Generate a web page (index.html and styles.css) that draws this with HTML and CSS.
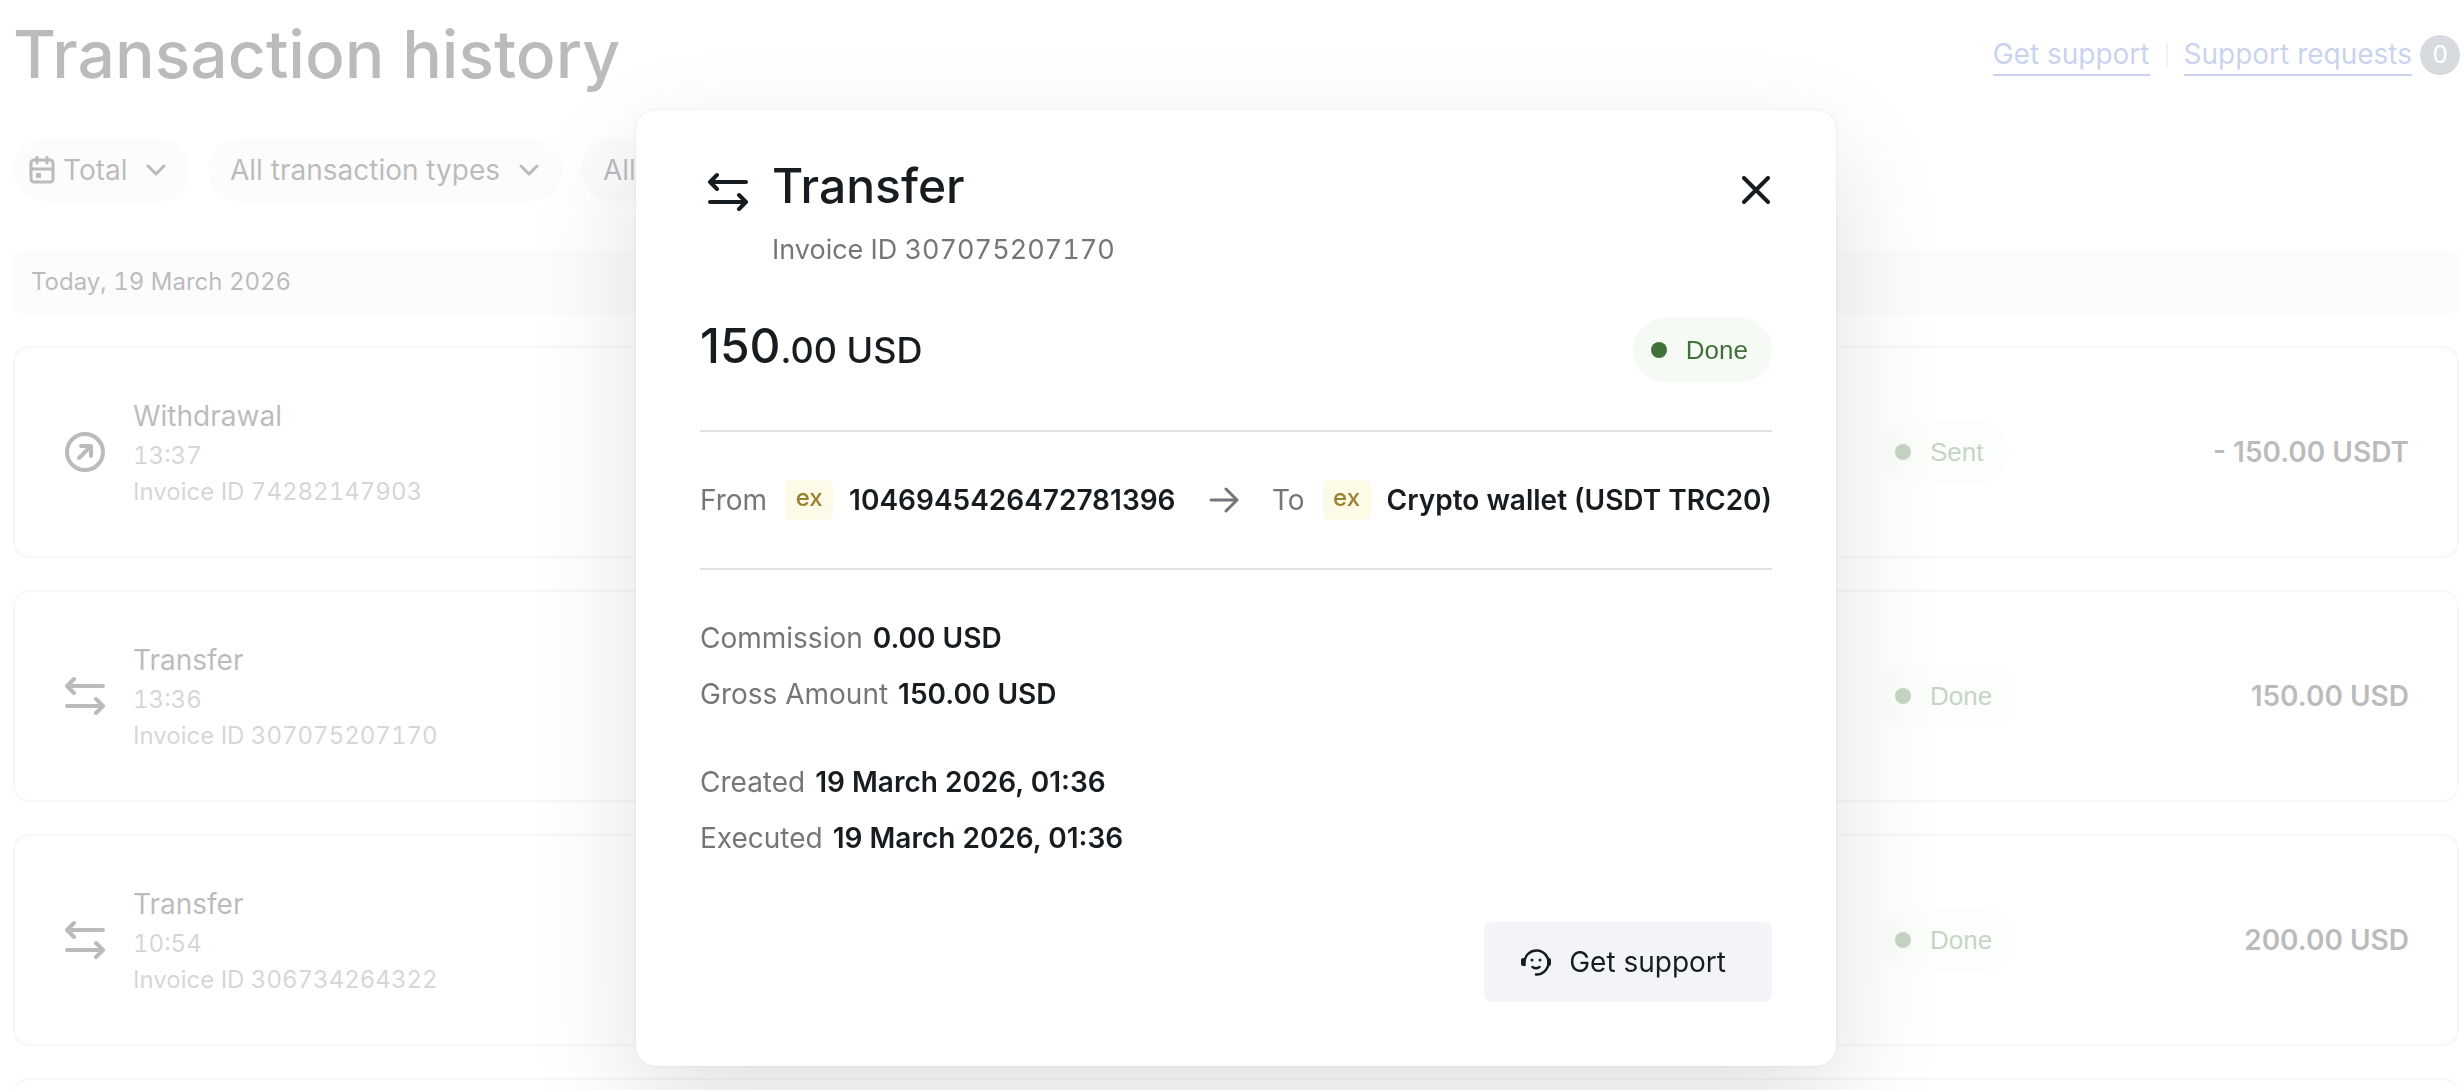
FILE: index.html
```html
<!DOCTYPE html>
<html lang="en">
<head>
<meta charset="utf-8">
<meta name="viewport" content="width=device-width, initial-scale=1">
<title>Transaction history</title>
<link rel="stylesheet" href="styles.css">
</head>
<body>
<svg class="sprite" aria-hidden="true">
  <symbol id="i-transfer" viewBox="0 0 40 40"><path d="M38 10H2M9 3L2 10l7 7M2 30h36M31 23l7 7-7 7"/></symbol>
  <symbol id="i-out" viewBox="0 0 40 40"><circle cx="20" cy="20" r="18"/><path d="M14 26l12-12M16 14h10v10"/></symbol>
  <symbol id="i-chevron" viewBox="0 0 20 12"><path d="M2 2l8 8 8-8"/></symbol>
  <symbol id="i-calendar" viewBox="0 0 26 28"><rect x="2" y="4" width="22" height="22" rx="3"/><path d="M2 13h22M8 1v6M18 1v6"/><path class="fill" d="M7 17h5v5H7z"/></symbol>
  <symbol id="i-close" viewBox="0 0 28 28"><path d="M2 2l24 24M26 2L2 26"/></symbol>
  <symbol id="i-arrow" viewBox="0 0 30 26"><path d="M2 13h26M17 2l11 11-11 11"/></symbol>
  <symbol id="i-support" viewBox="0 0 30 28"><path d="M2 12v4M28 12v4" stroke-width="4"/><path stroke-width="2.500" d="M3.500 17V14A12 12 0 1 1 15 26.500M11.500 19q3.500 2.500 7 0"/><circle class="fill" cx="11" cy="12" r="1.500"/><circle class="fill" cx="19" cy="12" r="1.500"/></symbol>
</svg>

<main class="page">
  <header class="page-header">
    <h1 class="page-title">Transaction history</h1>
    <nav class="support-links">
      <a class="link" href="#support">Get support</a>
      <span class="separator"></span>
      <a class="link" href="#requests">Support requests</a>
      <span class="count">0</span>
    </nav>
  </header>

  <div class="filters">
    <label class="filter filter-date">
      <svg class="icon-calendar"><use href="#i-calendar"/></svg>
      <select aria-label="Period"><option>Total</option></select>
      <svg class="icon-chevron"><use href="#i-chevron"/></svg>
    </label>
    <label class="filter">
      <select aria-label="Transaction type"><option>All transaction types</option></select>
      <svg class="icon-chevron"><use href="#i-chevron"/></svg>
    </label>
    <label class="filter">
      <select aria-label="Status"><option>All</option></select>
      <svg class="icon-chevron"><use href="#i-chevron"/></svg>
    </label>
  </div>

  <h2 class="day">Today, 19 March 2026</h2>

  <ul class="transactions">
    <li class="transaction">
      <svg class="icon"><use href="#i-out"/></svg>
      <div class="summary"><p class="kind">Withdrawal</p><p class="meta">13:37</p><p class="meta">Invoice ID 74282147903</p></div>
      <div class="state"><span class="badge">Sent</span></div>
      <strong class="sum">- 150.00 USDT</strong>
    </li>
    <li class="transaction">
      <svg class="icon"><use href="#i-transfer"/></svg>
      <div class="summary"><p class="kind">Transfer</p><p class="meta">13:36</p><p class="meta">Invoice ID 307075207170</p></div>
      <div class="state"><span class="badge">Done</span></div>
      <strong class="sum">150.00 USD</strong>
    </li>
    <li class="transaction">
      <svg class="icon"><use href="#i-transfer"/></svg>
      <div class="summary"><p class="kind">Transfer</p><p class="meta">10:54</p><p class="meta">Invoice ID 306734264322</p></div>
      <div class="state"><span class="badge">Done</span></div>
      <strong class="sum">200.00 USD</strong>
    </li>
    <li class="transaction"></li>
  </ul>
</main>

<div class="overlay">
  <section class="modal" role="dialog" aria-modal="true" aria-labelledby="modal-title">
    <header class="modal-header">
      <svg class="icon"><use href="#i-transfer"/></svg>
      <div class="modal-heading">
        <h2 class="modal-title" id="modal-title">Transfer</h2>
        <p class="modal-sub">Invoice ID 307075207170</p>
      </div>
      <button class="close" type="button" aria-label="Close"><svg><use href="#i-close"/></svg></button>
    </header>
    <div class="amount-row">
      <p class="amount">150<span class="amount-rest">.00 USD</span></p>
      <span class="badge">Done</span>
    </div>
    <div class="route">
      <span class="label">From</span><span class="tile">ex</span><strong>1046945426472781396</strong>
      <svg class="icon-arrow"><use href="#i-arrow"/></svg>
      <span class="label">To</span><span class="tile">ex</span><strong>Crypto wallet (USDT TRC20)</strong>
    </div>
    <dl class="details">
      <div><dt>Commission</dt><dd>0.00 USD</dd></div>
      <div><dt>Gross Amount</dt><dd>150.00 USD</dd></div>
    </dl>
    <dl class="details">
      <div><dt>Created</dt><dd>19 March 2026, 01:36</dd></div>
      <div><dt>Executed</dt><dd>19 March 2026, 01:36</dd></div>
    </dl>
    <footer class="modal-footer">
      <button class="support" type="button"><svg><use href="#i-support"/></svg>Get support</button>
    </footer>
  </section>
</div>
</body>
</html>
```
FILE: styles.css
```css
* { box-sizing: border-box; }

body {
  margin: 0;
  height: 100vh;
  overflow: hidden;
  background: #fff;
  color: #171c20;
  font: 400 28px/40px Inter, "Liberation Sans", sans-serif;
}

h1, h2, p, ul, dl, dd { margin: 0; padding: 0; font-weight: inherit; }
ul { list-style: none; }
strong, dd { font-weight: 600; }
button, select { font: inherit; color: inherit; border: 0; background: none; padding: 0; }

svg { fill: none; stroke: currentColor; stroke-width: 4; stroke-linecap: round; stroke-linejoin: round; flex: none; display: block; }
.fill { fill: currentColor; stroke: none; }
.sprite { display: none; }
.icon { width: 40px; height: 40px; }
.icon-chevron { width: 20px; height: 12px; stroke-width: 3; }
.icon-calendar { width: 26px; height: 28px; stroke-width: 3; }
.icon-arrow { width: 30px; height: 26px; stroke-width: 3; color: #73777a; margin: 0 auto; }

/* Page */
.page { height: 100vh; overflow: hidden; padding: 16px 2px 0 13px; }
.page-header { display: flex; justify-content: space-between; align-items: flex-start; height: 122px; }
.page-title { font-size: 66px; line-height: 76px; font-weight: 500; }
.support-links { display: flex; align-items: center; padding-top: 18px; }
.link { color: #486cc6; text-decoration: none; line-height: 40px; border-bottom: 2px solid; }
.separator { width: 2px; height: 24px; margin: 0 16px; background: #d0d0d0; }
.count { width: 40px; height: 40px; margin-left: 8px; border-radius: 50%; background: #7a8491; color: #fff; font-size: 24px; text-align: center; }

.filters { display: flex; gap: 18px; }
.filter { display: flex; align-items: center; height: 64px; padding: 0 24px 0 22px; border-radius: 32px; background: #f5f5f6; }
.filter-date { padding-left: 16px; }
.filter select { appearance: none; margin-right: 18px; }
.filter-date select { margin-left: 8px; }

.day { height: 64px; margin: 48px 0 32px; padding: 0 18px; border-radius: 8px; background: #f5f5f6; font-size: 24px; line-height: 64px; }

.transactions { display: grid; gap: 32px; margin-right: 1px; }
.transaction { display: flex; align-items: center; height: 212px; padding: 0 48px 0 50px; border: 2px solid #e3e3e3; border-radius: 16px; }
.summary { flex: 1; padding-left: 28px; }
.kind { line-height: 44px; }
.meta { font-size: 24px; line-height: 36px; color: #73777a; }
.day, .meta, .modal-sub { font-variant-numeric: tabular-nums; }
.state { width: 270px; }
.sum { width: 262px; text-align: right; }

.badge { display: inline-flex; align-items: center; height: 64px; padding: 0 24px 0 18px; gap: 19px; border-radius: 32px; background: #f5faf5; color: #427039; font: 26px/64px "Liberation Sans", sans-serif; }
.badge::before { content: ""; width: 16px; height: 16px; border-radius: 50%; background: currentColor; }

/* Transaction dialog */
.overlay { position: fixed; inset: 0; display: flex; justify-content: center; align-items: flex-start; padding: 110px 3px 24px 13px; background: rgba(255, 255, 255, .7); }
.modal { width: 100%; max-width: 1200px; padding: 48px 64px 64px; border-radius: 20px; background: #fff; box-shadow: 0 0 2px rgba(0, 0, 0, .12), 0 40px 112px rgba(0, 0, 0, .12); }
.modal-header { display: flex; align-items: flex-start; }
.modal-header .icon { margin: 14px 24px 0 8px; }
.modal-heading { flex: 1; }
.modal-title { font-size: 48px; line-height: 56px; font-weight: 500; }
.modal-sub { margin-top: 16px; color: #73777a; font-size: 27px; }
.close { margin: 18px 2px 0 0; cursor: pointer; }
.close svg { width: 28px; height: 28px; }
.amount-row { display: flex; justify-content: space-between; align-items: flex-start; margin: 48px 0; }
.amount { font-size: 48px; line-height: 56px; font-weight: 500; }
.amount-rest { font-size: 36px; line-height: 40px; }

.route { display: flex; align-items: center; height: 140px; border: solid #e2e2e2; border-width: 2px 0; margin-bottom: 40px; white-space: nowrap; }
.label, dt { color: #73777a; }
.tile { width: 48px; height: 40px; margin: 0 16px 0 18px; border-radius: 6px; background: #fdfae8; color: #9a8130; font-size: 24px; line-height: 36px; font-weight: 500; text-align: center; }

.details { margin-bottom: 32px; }
.details div { display: flex; gap: 10px; line-height: 56px; }
.modal-footer { display: flex; justify-content: flex-end; padding-top: 24px; }
.support { display: flex; align-items: center; gap: 18px; height: 80px; padding: 0 46px 0 37px; border-radius: 8px; background: #f3f4f7; cursor: pointer; }
.support svg { width: 30px; height: 28px; }
```
